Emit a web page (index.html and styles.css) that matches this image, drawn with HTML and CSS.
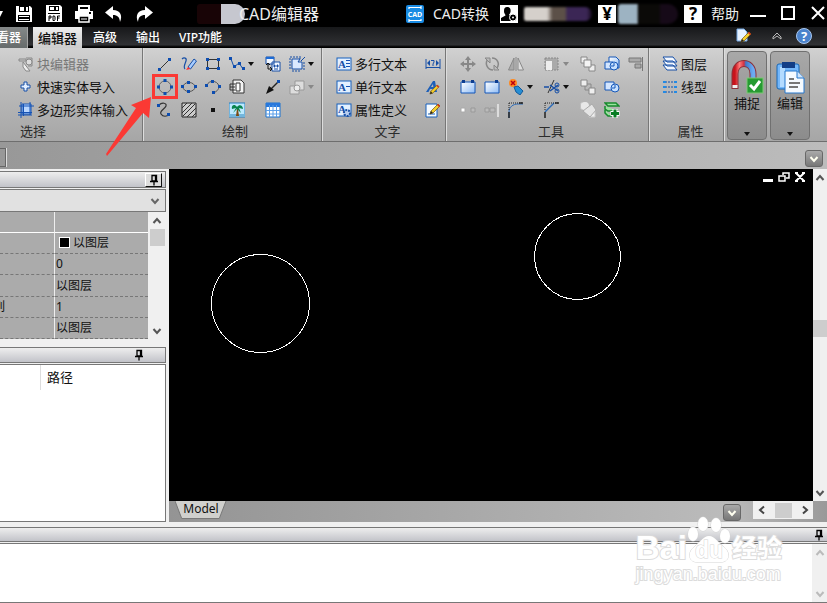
FILE: index.html
```html
<!DOCTYPE html>
<html lang="zh-CN">
<head>
<meta charset="utf-8">
<title>CAD编辑器</title>
<link rel="stylesheet" href="styles.css">
</head>
<body>
<svg class="defs" aria-hidden="true">
  <defs>
    <linearGradient id="blue" x1="0" y1="0" x2="1" y2="1"><stop offset="0" stop-color="#fff"/><stop offset="1" stop-color="#8fbcf5"/></linearGradient>
    <linearGradient id="red" x1="0" y1="0" x2="1" y2="0"><stop offset="0" stop-color="#c8141c"/><stop offset=".25" stop-color="#ff7a7a"/><stop offset=".5" stop-color="#d03040"/><stop offset=".6" stop-color="#3b78c9"/><stop offset="1" stop-color="#6cabf2"/></linearGradient>
    <symbol id="down" viewBox="0 0 10 10"><path d="M1.500 3 5 7 8.500 3" fill="none" stroke="currentColor" stroke-width="2"/></symbol>
    <symbol id="up" viewBox="0 0 10 10"><path d="M1.500 7 5 3 8.500 7" fill="none" stroke="currentColor" stroke-width="2"/></symbol>
    <symbol id="left" viewBox="0 0 10 10"><path d="M7 1.500 3 5 7 8.500" fill="none" stroke="currentColor" stroke-width="2"/></symbol>
    <symbol id="right" viewBox="0 0 10 10"><path d="M3 1.500 7 5 3 8.500" fill="none" stroke="currentColor" stroke-width="2"/></symbol>
    <symbol id="caret" viewBox="0 0 6 4"><path d="M0 0H6L3 4Z" fill="currentColor"/></symbol>
    <symbol id="pin" viewBox="0 0 10 12"><path d="M3 1.500H7.500V7H3ZM1 7.500H9M5 7V11.500M6.500 1V7" fill="none" stroke="#000" stroke-width="1.300"/></symbol>
    <symbol id="pencil" viewBox="0 0 12 12"><path d="M1 11 2 8 9 1 11 3 4 10Z" fill="#f5cf2c" stroke="#72510d" stroke-width=".7"/><path d="M8 2 9 1 11 3 10 4Z" fill="#d8281b"/><path d="M1 11 2 8 4 10Z" fill="#222"/></symbol>
  </defs>
</svg>
<div class="app">
  <header class="titlebar">
    <div class="quick">
      <button class="tb folder" aria-label="打开"><svg viewBox="0 0 18 18"><path d="M8 14 14 6H18L14 14Z" fill="#fff"/></svg></button>
      <button class="tb" aria-label="保存"><svg viewBox="0 0 18 18"><path d="M1 1H15L17 3V17H1Z" fill="#fff"/><path d="M4 1H14V7H4ZM3 10H15V16H3Z" fill="#000"/><path d="M5 2H9V6H5ZM11 2H13V6H11ZM4 11H14V12H4ZM4 14H14V15H4Z" fill="#fff"/></svg></button>
      <button class="tb" aria-label="保存为 PDF"><svg viewBox="0 0 18 18"><path d="M1 0H15L17 2V17H1Z" fill="#fff"/><path d="M4 1H14V6H4ZM3 8H15V9H3Z" fill="#000"/><path d="M5 2H9V5H5ZM11 2H13V5H11Z" fill="#fff"/><path d="M4 16V11H6V13H4M8 11V15.500H9.500L10 14.500V12L9.500 11ZM12.500 16V11H15M12.500 13H14.500" stroke="#000" fill="none"/></svg></button>
      <button class="tb" aria-label="打印"><svg viewBox="0 0 18 18"><path d="M4 1H14V5H4Z" fill="none" stroke="#fff" stroke-width="2"/><path d="M0 6H18V14H14V11H4V14H0Z" fill="#fff"/><path d="M4 11H14V17H4Z" fill="none" stroke="#fff" stroke-width="1.500"/><path d="M6 14H12" stroke="#fff"/><path d="M14 7H16V9H14Z" fill="#000"/></svg></button>
      <button class="tb" aria-label="撤销"><svg viewBox="0 0 18 18"><path d="M0 7.500 8 1V5C15 5 18 10 15 17 14.500 12 12.500 10 8 10V14Z" fill="#fff"/></svg></button>
      <button class="tb" aria-label="重做"><svg viewBox="0 0 18 18"><path d="M18 7.500 10 1V5C3 5 0 10 3 17 3.500 12 5.500 10 10 10V14Z" fill="#fff"/></svg></button>
    </div>
    <div class="caption"><span class="smudge smudge-a"></span><h1>CAD编辑器</h1></div>
    <div class="account">
      <button class="convert"><svg viewBox="0 0 18 18"><rect width="18" height="18" rx="2" fill="#198be3"/><path d="M3 4V2.500H15M15 1V4M15 14V15.500H3M3 14V17" stroke="#fff" fill="none" stroke-width="1.200"/><text x="9" y="12" class="badge-text">CAD</text></svg><span>CAD转换</span></button>
      <button class="tb user" aria-label="用户"><svg viewBox="0 0 18 18"><rect width="18" height="18" fill="#fff"/><path d="M7 2C10 2 11 4 10.500 7 10 9 9 9 9 10L13 12V16H1V13L5.500 10.500C5.500 9 4 9 4 6 4 3 5 2 7 2Z" fill="#000"/><circle cx="13" cy="12.500" r="3.500" fill="#000" stroke="#fff"/><circle cx="13" cy="12.500" r="1" fill="#fff"/></svg></button>
      <span class="smudge smudge-b"></span>
      <button class="square">¥</button>
      <span class="smudge smudge-c"></span>
      <button class="square">?</button>
      <a class="help" href="#">帮助</a>
    </div>
    <div class="window">
      <button class="tb" aria-label="最小化"><svg viewBox="0 0 18 18"><path d="M1 11H17" stroke="#fff" stroke-width="2"/></svg></button>
      <button class="tb" aria-label="最大化"><svg viewBox="0 0 18 18"><path d="M3 2H15V14H3Z" stroke="#fff" fill="none" stroke-width="2"/></svg></button>
      <button class="tb" aria-label="关闭"><svg viewBox="0 0 18 18"><path d="M3 2 15 14M15 2 3 14" stroke="#fff" stroke-width="2"/></svg></button>
    </div>
  </header>

  <nav class="tabs">
    <button class="tab viewer">看器</button>
    <button class="tab active">编辑器</button>
    <button class="tab">高级</button>
    <button class="tab">输出</button>
    <button class="tab">VIP功能</button>
    <div class="tab-tools">
      <button class="ic" aria-label="样式"><svg viewBox="0 0 16 16"><path d="M1 1H8L11 4V13H1Z" fill="#e8f2ff" stroke="#74a9e6"/><use href="#pencil" x="4" y="3" width="12" height="12"/></svg></button>
      <button class="ic fold" aria-label="折叠"><svg viewBox="0 0 16 16"><path d="M4 9 8 5 12 9V11L8 8 4 11Z" stroke="#bbb" fill="none"/></svg></button>
      <button class="ic" aria-label="帮助"><svg viewBox="0 0 16 16"><circle cx="8" cy="8" r="7.500" fill="#4b83cc" stroke="#a9c7ef"/><text x="8" y="13" class="q">?</text></svg></button>
    </div>
  </nav>

  <section class="ribbon">
    <div class="panel select">
      <div class="rows">
        <button class="cmd off"><svg viewBox="0 0 16 16"><path d="M1 3H8V5H1ZM8 2H14V10H10" fill="none" stroke="#888"/><circle cx="11" cy="6" r="3" fill="#ddd" stroke="#888"/><path d="M5 6 12 15H8L5 11Z" fill="#eee" stroke="#888"/></svg>块编辑器</button>
        <button class="cmd"><svg viewBox="0 0 16 16"><path d="M6 3H9V6H12V9H9V12H6V9H3V6H6Z" fill="#e3efff" stroke="#174fa6"/></svg>快速实体导入</button>
        <button class="cmd"><svg viewBox="0 0 16 16"><path d="M4 2H13V12H4Z" fill="#b8d6ff" stroke="#1552b4"/><path d="M1 4H16M0 13H14M3 0V16M12 0V13M5.500 2V14M0 10.500H14" fill="none" stroke="#1552b4"/></svg>多边形实体输入</button>
      </div>
      <h2>选择</h2>
    </div>

    <div class="panel draw">
      <div class="tools">
        <button class="ic" aria-label="直线"><svg viewBox="0 0 16 16"><path d="M3 13 13 3" stroke="#333"/><path d="M1 12H4V15H1ZM11 2H14V5H11Z" fill="#0d4db0"/></svg></button>
        <button class="ic" aria-label="徒手画"><svg viewBox="0 0 16 16"><path d="M1 3C3 1 6 2 5 5S2 11 4 13" fill="none" stroke="#174fa6" stroke-width="1.200"/><path d="M7 11 13 3 15.500 5 9.500 13Z" fill="#a7ccff" stroke="#174fa6"/><path d="M5 14 7 11 9.500 13Z" fill="#f33"/></svg></button>
        <button class="ic" aria-label="矩形"><svg viewBox="0 0 16 16"><path d="M2.500 3.500H13.500V12.500H2.500Z" fill="none" stroke="#333"/><path d="M1 2H4V5H1ZM12 2H15V5H12ZM1 11H4V14H1ZM12 11H15V14H12Z" fill="#0d4db0"/></svg></button>
        <button class="ic more" aria-label="多段线"><svg viewBox="0 0 16 16"><path d="M2 3 5 11 10 7 14 13" fill="none" stroke="#174fa6"/><path d="M0 1H3V4H0ZM4 9H7V12H4ZM9 6H12V9H9ZM13 11H16V14H13Z" fill="#0d4db0"/></svg><svg class="caret"><use href="#caret"/></svg></button>
        <button class="ic" aria-label="插入块"><svg viewBox="0 0 16 16"><path d="M1 1H9V8H1ZM7 6H15V15H7Z" fill="#f3f8ff" stroke="#174fa6"/><path d="M1 1H9V3H1Z" fill="#1c6bd6"/><path d="M3 7V13H6M1 9 3 7 5 9M5 11 7 13 5 15" fill="none" stroke="#111"/><path d="M9 9H10V11H9ZM12 9H13V11H12ZM9 13H13" fill="#174fa6" stroke="#174fa6"/></svg></button>
        <button class="ic more" aria-label="图案"><svg viewBox="0 0 16 16"><path d="M3 3H11L9 6 13 6V13H3Z" fill="#dbe9ff" stroke="#174fa6"/><path d="M2 0V2M5 0V2M8 0V2M11 0V3M0 3H2M0 6H2M0 9H2M0 12H2M14 7H16M14 10H16M14 13H16M4 14V16M7 14V16M10 14V16M12 5 16 1" stroke="#174fa6"/></svg><svg class="caret"><use href="#caret"/></svg></button>
        <button class="ic picked" aria-label="圆"><svg viewBox="0 0 16 16"><circle cx="8" cy="8" r="6" fill="none" stroke="#666"/><path d="M6.500 0H9.500V3H6.500ZM6.500 13H9.500V16H6.500ZM0 6.500H3V9.500H0ZM13 6.500H16V9.500H13Z" fill="#0d4db0"/></svg>
          <svg class="pointer" viewBox="0 0 48 64"><path d="M46 1 44 22 38 17 2 60 1 58 31 12 26 9Z" fill="#fb3934"/></svg>
        </button>
        <button class="ic" aria-label="椭圆"><svg viewBox="0 0 16 16"><ellipse cx="8" cy="8" rx="6" ry="4.500" fill="none" stroke="#555"/><path d="M6 2H9V5H6ZM6 11H9V14H6ZM0 6H3V9H0ZM13 6H16V9H13Z" fill="#0d4db0"/></svg></button>
        <button class="ic" aria-label="圆弧"><svg viewBox="0 0 16 16"><path d="M2 6C4 1 12 1 14 7 14 11 11 13 8 14" fill="none" stroke="#555"/><path d="M0 5H3V8H0ZM6 1H9V4H6ZM13 6H16V9H13ZM7 12H10V15H7Z" fill="#0d4db0"/></svg></button>
        <button class="ic" aria-label="图块"><svg viewBox="0 0 16 16"><path d="M4 1H12L15 4V14H4Z" fill="#f4f4f4" stroke="#333"/><path d="M7 4H11V12H7ZM1 5H6M1 8H6M1 11H6M1 5V11" fill="#fff" stroke="#333"/></svg></button>
        <button class="ic" aria-label="射线"><svg viewBox="0 0 16 16"><path d="M14 2 5 11" stroke="#222" stroke-width="1.500"/><path d="M1 15 4 7 9 11Z" fill="#111"/><path d="M12 1H15V4H12Z" fill="#0d4db0"/></svg></button>
        <button class="ic more off" aria-label="区域"><svg viewBox="0 0 16 16"><path d="M1 7H10V15H1ZM6 2H15V11H6Z" fill="#ddd" stroke="#999"/><circle cx="8" cy="9" r="3" fill="#eee" stroke="#999"/></svg><svg class="caret"><use href="#caret"/></svg></button>
        <button class="ic" aria-label="样条"><svg viewBox="0 0 16 16"><path d="M2 3C5 0 10 1 9 4S2 9 4 12 10 15 12 12" fill="none" stroke="#333" stroke-width="1.200"/><path d="M0 2H3V5H0ZM10 11H13V14H10Z" fill="#0d4db0"/></svg></button>
        <button class="ic" aria-label="填充"><svg viewBox="0 0 16 16"><path d="M1 1H15V15H1Z" fill="#ccc" stroke="#222"/><path d="M1 6 6 1M1 11 11 1M2 14 14 2M6 15 15 6M11 15 15 11" stroke="#333"/></svg></button>
        <button class="ic" aria-label="点"><svg viewBox="0 0 16 16"><path d="M6 6H10V10H6Z" fill="#111"/></svg></button>
        <button class="ic" aria-label="图像"><svg viewBox="0 0 16 16"><path d="M0 1H16V15H0Z" fill="#bce9ff" stroke="#267fbd"/><path d="M0 12H16V15H0Z" fill="#73b6dd"/><path d="M8 7 7 14H10L9 7Z" fill="#7c4a12"/><path d="M8 5C5 1 2 4 3 7L7 6 4 11 8 7 12 11 10 6 14 7C14 3 10 2 8 5Z" fill="#09844d"/></svg></button>
        <button class="ic" aria-label="表格"><svg viewBox="0 0 16 16"><path d="M1 1H15V15H1Z" fill="#fff" stroke="#1873d1"/><path d="M1 1H15V5H1Z" fill="#2878dc"/><path d="M4.500 3V15M8 3V15M11.500 3V15M1 8.500H15M1 12H15" stroke="#5a9ee9"/></svg></button>
      </div>
      <h2>绘制</h2>
    </div>

    <div class="panel text">
      <div class="text-cols">
        <div class="rows">
          <button class="cmd"><svg viewBox="0 0 16 16"><rect x="1" y="2" width="14" height="12" fill="#e4f0ff" stroke="#1761bd"/><text x="6" y="12" class="a">A</text><path d="M10 4.500H14M10 7.500H14M10 10.500H14" stroke="#1552b4"/></svg>多行文本</button>
          <button class="cmd"><svg viewBox="0 0 16 16"><rect x="1" y="2" width="14" height="12" fill="#e4f0ff" stroke="#1761bd"/><text x="6" y="12" class="a">A</text><path d="M10 7.500H14" stroke="#1552b4"/></svg>单行文本</button>
          <button class="cmd"><svg viewBox="0 0 16 16"><rect x="1" y="2" width="14" height="12" fill="#e4f0ff" stroke="#1761bd"/><text x="6" y="11" class="a">A</text><circle cx="11" cy="11" r="3" fill="#b9cff0" stroke="#174fa6" stroke-width="2" stroke-dasharray="2 1"/></svg>属性定义</button>
        </div>
        <div class="rows">
          <button class="ic" aria-label="标注"><svg viewBox="0 0 16 16"><path d="M1 3V13M15 3V13M1 11.500H15" stroke="#174fa6"/><path d="M2 7 5 4V10ZM14 7 11 4V10Z" fill="#174fa6"/><path d="M6 4.500H9V6L8 8V10" fill="none" stroke="#174fa6"/></svg></button>
          <button class="ic" aria-label="文字样式"><svg viewBox="0 0 16 16"><path d="M1 13 8 2H10L12 13H9L8.500 10H5L3.500 13ZM6 8H8.300L8 5Z" fill="#1d5fb8"/><use href="#pencil" x="4" y="5" width="11" height="11"/></svg></button>
          <button class="ic" aria-label="编辑文字"><svg viewBox="0 0 16 16"><path d="M1 2H12V15H1Z" fill="#f6fbff" stroke="#1761bd"/><path d="M3 12H10" stroke="#1761bd"/><use href="#pencil" x="4" y="1" width="12" height="12"/></svg></button>
        </div>
      </div>
      <h2>文字</h2>
    </div>

    <div class="panel edit">
      <div class="tools">
        <button class="ic" aria-label="移动"><svg viewBox="0 0 16 16"><path d="M8 2V14M2 8H14" stroke="#888" stroke-width="2"/><path d="M5 4 8 0 11 4ZM5 12 8 16 11 12ZM4 5 0 8 4 11ZM12 5 16 8 12 11Z" fill="#888"/></svg></button>
        <button class="ic" aria-label="旋转"><svg viewBox="0 0 16 16"><path d="M4 3C0 8 4 14 9 14M12 13C17 8 13 2 8 2" fill="none" stroke="#888" stroke-width="1.500"/><path d="M1 2H6V7ZM15 14H10V9Z" fill="#bbb" stroke="#888"/></svg></button>
        <button class="ic" aria-label="镜像"><svg viewBox="0 0 16 16"><path d="M6 2V14H0.500Z" fill="#aaa" stroke="#888"/><path d="M10 2V14H15.500Z" fill="#ddd" stroke="#888"/><path d="M8 1V15" stroke="#888"/></svg></button>
        <button class="ic more off" aria-label="拉伸"><svg viewBox="0 0 16 16"><path d="M1 2H14V14H1Z" fill="#aaa" stroke="#888" stroke-dasharray="2 1"/><path d="M2 5H8V14H2Z" fill="#eee"/></svg><svg class="caret"><use href="#caret"/></svg></button>
        <button class="ic" aria-label="复制"><svg viewBox="0 0 16 16"><path d="M1 1H7V7H1ZM9 9H15V15H9Z" fill="#eee" stroke="#888"/><path d="M4 4H11V11H4Z" fill="#f4f4f4" stroke="#888"/></svg></button>
        <button class="ic" aria-label="缩放"><svg viewBox="0 0 16 16"><path d="M5 1H12L15 4V12H5Z" fill="url(#blue)" stroke="#1557b8"/><path d="M1 6H9V13H1Z" fill="#d4e6ff" stroke="#1557b8"/><circle cx="10" cy="10" r="4" fill="#c6e0ff" stroke="#1557b8"/><path d="M10 7V10H7" fill="none" stroke="#1557b8"/></svg></button>
        <button class="ic" aria-label="对齐"><svg viewBox="0 0 16 16"><path d="M1 2H13V6H1ZM7 8H13V12H7Z" fill="#aaa" stroke="#777"/><path d="M14.500 1V15" stroke="#777"/></svg></button>
        <button class="ic" aria-label="阵列"><svg viewBox="0 0 16 16"><path d="M1 3H15V14H1Z" fill="url(#blue)" stroke="#1557b8"/><path d="M2 1H5V4H2ZM11 1H14V4H11Z" fill="#0d3d90"/></svg></button>
        <button class="ic" aria-label="打断"><svg viewBox="0 0 16 16"><path d="M1 3H15V14H1Z" fill="url(#blue)" stroke="#1557b8"/><path d="M11 1H14V4H11Z" fill="#0d3d90"/></svg></button>
        <button class="ic more" aria-label="分解"><svg viewBox="0 0 16 16"><circle cx="5" cy="4" r="4" fill="#ff8a20"/><path d="M3 2 7 6M7 2 3 6" stroke="#b01" stroke-width="1.500"/><path d="M6 8 10 7 15 12 12 16 8 13Z" fill="#278ed3" stroke="#145a9b"/></svg><svg class="caret"><use href="#caret"/></svg></button>
        <button class="ic more" aria-label="修剪"><svg viewBox="0 0 16 16"><path d="M4 14 10 1" stroke="#333"/><path d="M0 8H5M6 6 14 12M6 12 14 6" stroke="#174fa6" stroke-width="1.500"/><circle cx="13" cy="6" r="2" fill="none" stroke="#174fa6"/><circle cx="13" cy="12" r="2" fill="none" stroke="#174fa6"/></svg><svg class="caret"><use href="#caret"/></svg></button>
        <button class="ic" aria-label="编组"><svg viewBox="0 0 16 16"><path d="M7 5H11V9M5 7V11H9" fill="none" stroke="#888"/><path d="M1 1H7V7H1ZM9 9H15V15H9Z" fill="#eee" stroke="#888"/></svg></button>
        <button class="ic" aria-label="测量"><svg viewBox="0 0 16 16"><path d="M1 3H10V11H1Z" fill="#d4e6ff" stroke="#1557b8"/><circle cx="11" cy="9" r="4" fill="#c6e0ff" stroke="#1557b8"/><path d="M11 6V9H8" fill="none" stroke="#1557b8"/></svg></button>
        <span></span>
        <button class="ic" aria-label="断点"><svg viewBox="0 0 16 16"><path d="M1 6H5V10H1Z" fill="#fff" stroke="#aaa"/><path d="M11 6H15V10H11Z" fill="#bbb" stroke="#999"/></svg></button>
        <button class="ic" aria-label="延伸"><svg viewBox="0 0 16 16"><path d="M1 6H5V10H1ZM6 6H11V10H6Z" fill="#bbb" stroke="#999"/><path d="M14 2V15" stroke="#ddd" stroke-width="2"/></svg></button>
        <button class="ic" aria-label="圆角"><svg viewBox="0 0 16 16"><path d="M1 16V10C1 5 5 2 10 2H15" fill="none" stroke="#2a6ab8"/><path d="M1 1H15M1 1V9" stroke="#222" stroke-dasharray="1 1"/><path d="M1 10V16M11 1H15" stroke="#222" stroke-width="1.500"/></svg></button>
        <button class="ic" aria-label="倒角"><svg viewBox="0 0 16 16"><path d="M1 10 10 1" stroke="#2a6ab8" stroke-width="1.500"/><path d="M1 1H15M1 1V9" stroke="#222" stroke-dasharray="1 1"/><path d="M1 10V16M11 1H15" stroke="#222" stroke-width="1.500"/></svg></button>
        <button class="ic" aria-label="合并"><svg viewBox="0 0 16 16"><path d="M1 1H7V7H1ZM9 9H15V15H9Z" fill="#eee" stroke="#ccc"/><circle cx="5" cy="4" r="4" fill="#e8e8e8"/><path d="M3 9 12 2 16 8 10 15Z" fill="#e4e4e4" stroke="#aaa"/></svg></button>
        <button class="ic" aria-label="添加图层"><svg viewBox="0 0 16 16"><path d="M1 1H12L15 4H4ZM1 4V7L4 9H14M1 8V11L4 14H8" fill="#9ae39f" stroke="#168b2c" stroke-width="1.500"/><path d="M11 7V16M6.500 11.500H15.500" stroke="#fff" stroke-width="5"/><path d="M11 7.500V15.500M7 11.500H15" stroke="#087c23" stroke-width="3"/></svg></button>
      </div>
      <h2>工具</h2>
    </div>

    <div class="panel props">
      <div class="rows">
        <button class="cmd"><svg viewBox="0 0 16 16"><path d="M1 9H11L15 14H5ZM1 5H11L15 10H5ZM1 1H11L15 6H5Z" fill="#f3f8ff" stroke="#174fa6"/></svg>图层</button>
        <button class="cmd"><svg viewBox="0 0 16 16"><path d="M3 3H13M3 8H13M3 13H13" stroke="#174fa6" stroke-dasharray="2 1"/><path d="M1 2H4V4H1ZM12 2H15V4H12ZM1 7H4V9H1ZM12 7H15V9H12ZM1 12H4V14H1ZM12 12H15V14H12Z" fill="#238ae5"/></svg>线型</button>
      </div>
      <h2>属性</h2>
    </div>

    <div class="large">
      <button class="tall"><svg viewBox="0 0 36 36"><path d="M6 30V15C6 1 24 1 24 15V23" fill="none" stroke="#8d3038" stroke-width="7"/><path d="M6 27V15C6 1 24 1 24 15V22" fill="none" stroke="url(#red)" stroke-width="5"/><path d="M3.500 26H8.500V29H3.500Z" fill="#eee"/><rect x="18" y="19" width="16" height="15" fill="#269b32" stroke="#7cc976"/><path d="M21 26 25 30 31 22" fill="none" stroke="#fff" stroke-width="3"/></svg>捕捉<svg class="caret"><use href="#caret"/></svg></button>
      <button class="tall"><svg viewBox="0 0 36 36"><rect x="5" y="5" width="22" height="25" rx="2" fill="#74b7fa" stroke="#1767b5"/><rect x="8" y="8" width="5" height="20" fill="#b3dbff"/><path d="M10 3H23V9H10Z" fill="#123e87"/><path d="M13 12H25L32 19V34H13Z" fill="#f5faff" stroke="#2577cc"/><path d="M25 12V19H32" fill="#cfe4fa" stroke="#2577cc"/><path d="M17 20H22M17 24H28M17 28H26" stroke="#777" stroke-width="2"/></svg>编辑<svg class="caret"><use href="#caret"/></svg></button>
    </div>
  </section>

  <div class="docbar"><span class="doctab"></span><button class="drop" aria-label="文档列表"><svg><use href="#down"/></svg></button></div>

  <main class="work">
    <aside class="side">
      <div class="dockhead"><button class="pin raised" aria-label="固定"><svg><use href="#pin"/></svg></button></div>
      <div class="combo"><select aria-label="选择对象"><option></option></select><svg><use href="#down"/></svg></div>
      <div class="grid-wrap">
        <table class="grid">
          <tbody>
            <tr class="cat"><td></td><td></td></tr>
            <tr><td></td><td class="swatched"><i class="swatch"></i>以图层</td></tr>
            <tr><td></td><td>0</td></tr>
            <tr><td></td><td>以图层</td></tr>
            <tr><td><span class="cut">列</span></td><td>1</td></tr>
            <tr><td></td><td>以图层</td></tr>
          </tbody>
        </table>
        <div class="vscroll"><button aria-label="向上"><svg><use href="#up"/></svg></button><i class="thumb"></i><button class="end" aria-label="向下"><svg><use href="#down"/></svg></button></div>
      </div>
      <div class="dockhead second"><button class="pin" aria-label="固定"><svg><use href="#pin"/></svg></button></div>
      <div class="paths"><span class="path-name"></span><span class="path-col">路径</span></div>
    </aside>
    <section class="view">
      <div class="stage">
        <div class="canvas">
          <svg class="drawing"><circle cx="91.500" cy="134.500" r="49"/><circle cx="408.500" cy="87.500" r="43"/></svg>
          <div class="mdi">
            <button aria-label="最小化"><svg viewBox="0 0 12 12"><path d="M1 8H11V11H1Z" fill="#fff"/></svg></button>
            <button aria-label="还原"><svg viewBox="0 0 12 12"><path d="M5 4V2H11V7H8M1 5H7V10H1Z" fill="none" stroke="#fff" stroke-width="1.500"/></svg></button>
            <button aria-label="关闭"><svg viewBox="0 0 12 12"><path d="M2 2 10 10M10 2 2 10M1 2H4M8 2H11M1 10H4M8 10H11" stroke="#fff" stroke-width="2"/></svg></button>
          </div>
        </div>
        <div class="vscroll main"><button aria-label="向上"><svg><use href="#up"/></svg></button><i class="thumb"></i><button class="end" aria-label="向下"><svg><use href="#down"/></svg></button></div>
      </div>
      <div class="modelbar">
        <button class="model"><svg viewBox="0 0 54 18" preserveAspectRatio="none"><path d="M0 0 7 17.500H46L53 0" fill="#d0d0cd" stroke="#777"/></svg><span>Model</span></button>
        <button class="drop" aria-label="布局列表"><svg><use href="#down"/></svg></button>
        <div class="hscroll"><button aria-label="向左"><svg><use href="#left"/></svg></button><i class="thumb"></i><button aria-label="向右"><svg><use href="#right"/></svg></button></div>
      </div>
    </section>
  </main>

  <footer class="command">
    <div class="dockhead"><button class="pin" aria-label="固定"><svg><use href="#pin"/></svg></button></div>
    <div class="console"><textarea aria-label="命令行"></textarea><div class="vscroll pale"><button aria-label="向上"><svg><use href="#up"/></svg></button><button class="end" aria-label="向下"><svg><use href="#down"/></svg></button></div></div>
    <div class="watermark">
      <div class="mark"><span>Bai</span><svg viewBox="0 0 44 48"><path d="M22 20C28 20 31 27 37 31 45 38 41 47 33 46H11C3 47-1 38 7 31 13 27 16 20 22 20Z"/><ellipse cx="6" cy="18" rx="5" ry="7"/><ellipse cx="16" cy="8" rx="5" ry="7"/><ellipse cx="29" cy="9" rx="5" ry="7"/><ellipse cx="38" cy="20" rx="5" ry="7"/><text x="22" y="42">du</text></svg><span class="cn">经验</span></div>
      <div class="site">jingyan.baidu.com</div>
    </div>
  </footer>
</div>
</body>
</html>
```
FILE: styles.css
```css
* { box-sizing: border-box; }
body { margin: 0; font: 13px/16px "Noto Sans", "Noto Sans CJK SC", sans-serif; color: #111; }
button, select, textarea { font: inherit; color: inherit; background: none; border: 0; padding: 0; margin: 0; border-radius: 0; }
svg { display: block; flex: none; }
h1, h2 { margin: 0; font-weight: 400; }
.defs { position: absolute; width: 0; height: 0; }
.app { display: flex; flex-direction: column; height: 100vh; min-height: 560px; overflow: hidden; background: #f0f0f0; }

.titlebar { display: flex; align-items: center; height: 27px; background: #000; color: #eee; overflow: hidden; flex: none; }
.tb, .tb svg { width: 18px; height: 18px; flex: none; }
.quick { display: flex; gap: 12px; margin-left: -15px; }
.caption { display: flex; align-items: center; margin-left: 44px; }
.caption h1 { font-size: 16px; line-height: 24px; white-space: nowrap; margin-left: -6px; z-index: 1; }
.smudge { display: block; height: 20px; border-radius: 4px 12px 12px 4px; flex: none; }
.smudge-a { width: 48px; background: linear-gradient(90deg, #180406 0 50%, #c6c7cf 50%); }
.smudge-b { width: 68px; height: 14px; margin: 0 6px; filter: blur(1px); background: linear-gradient(90deg, #d5d0cb 0 34%, #5c5048 42% 60%, #3b2655 64% 92%, #150a1c); }
.smudge-c { width: 60px; margin: 0 6px 0 2px; filter: blur(1px); background: linear-gradient(90deg, #9db3c2 0 32%, #0b0a08 34% 68%, #160a18 72%); }
.account { display: flex; align-items: center; margin-left: auto; }
.convert { display: flex; align-items: center; gap: 9px; margin-right: 11px; font-size: 14px; white-space: nowrap; }
.convert svg { width: 18px; height: 18px; }
.badge-text { font: bold 7px "Open Sans", sans-serif; fill: #fff; text-anchor: middle; }
.square { width: 18px; height: 18px; background: #fff; color: #000; font: bold 17px/18px "Noto Sans", sans-serif; text-align: center; }
.help { color: inherit; text-decoration: none; font-size: 14px; margin: 0 10px 0 9px; }
.window { display: flex; gap: 12px; }

.tabs { display: flex; align-items: stretch; height: 21px; background: linear-gradient(#17181a, #303134 85%, #000 95%); color: #fff; flex: none; }
.tab { padding: 0 9px; margin-right: 1px; font-size: 12px; font-weight: 500; line-height: 20px; white-space: nowrap; }
.viewer { width: 28px; padding: 0; margin-right: 5px; text-indent: -3px; text-align: left; background: linear-gradient(#858989, #666b6b); border-right: 1px solid #a5a5a5; }
.tab.active { padding: 0 5px; margin-right: 2px; font-size: 13px; background: linear-gradient(#eee, #ccc); color: #111; }
.tab-tools { display: flex; gap: 3px; margin-left: auto; padding-right: 11px; }

.ribbon { display: flex; height: 94px; background: linear-gradient(#d1d1d1, #bbb 40%, #a6a6a6); border-bottom: 1px solid #6e6e6e; flex: none; }
.panel { display: flex; flex-direction: column; padding-top: 4px; border-right: 1px solid #777; box-shadow: 1px 0 #ddd; flex: none; }
.panel h2 { padding-left: 8px; font-size: 13px; line-height: 20px; text-align: center; color: #2c2c2c; }
.rows { display: flex; flex-direction: column; height: 69px; }
.cmd { display: flex; align-items: center; gap: 3px; height: 23px; white-space: nowrap; }
.cmd svg { width: 16px; height: 16px; }
.cmd.off { color: #777; }
.off .caret { color: #888; }
.ic { display: flex; align-items: center; height: 23px; padding: 0 4px; }
.tab-tools .ic { height: 18px; }
.fold { margin-left: 6px; }
.ic svg { width: 16px; height: 16px; }
.ic .caret, .tall .caret { width: 6px; height: 4px; }
.ic .caret { margin-left: 3px; }
.tools { display: grid; grid-template-columns: 24px 24px 24px 36px 24px 36px; grid-auto-rows: 23px; }
.select { width: 143px; padding-left: 18px; }
.select h2 { text-align: left; padding-left: 2px; }
.draw { width: 179px; padding-left: 10px; }
.draw h2 { padding: 0 4px 0 0; }
.text { width: 124px; }
.text-cols { display: flex; justify-content: space-between; padding-left: 14px; }
.edit { width: 203px; padding-left: 10px; }
.edit h2 { padding: 0 2px 0 0; }
.edit .tools { grid-template-columns: 24px 24px 36px 36px 24px 24px 24px; }
.props { width: 75px; padding-left: 13px; }
.props h2 { padding: 0 4px 0 0; }
.picked { position: relative; outline: 3px solid #fb3934; outline-offset: -2px; }
.ic .pointer { position: absolute; right: 24px; top: 21px; width: 48px; height: 64px; z-index: 3; }
.a { font: bold 11px "Liberation Serif", serif; fill: #174fa6; text-anchor: middle; }
.q { font: bold 13px "Noto Sans", sans-serif; fill: #fff; text-anchor: middle; }
.large { display: flex; gap: 3px; padding: 3px 3px 1px; }
.tall { display: flex; flex-direction: column; align-items: center; width: 40px; padding-top: 7px; background: linear-gradient(#a8a8a8, #8c8c8c); border: 1px solid #707070; border-radius: 4px; }
.tall > svg:first-child { width: 36px; height: 36px; }
.tall .caret { margin: auto 0 3px; }

.docbar { display: flex; align-items: center; justify-content: space-between; height: 27px; padding-right: 4px; background: linear-gradient(90deg, #989898, #bcbcbc); flex: none; }
.doctab { width: 6px; height: 19px; margin-top: 4px; border: 1px solid #666; border-left: 0; box-shadow: 1px 0 #ddd; }
.drop { display: flex; align-items: center; justify-content: center; width: 18px; height: 17px; border: 1px solid #686868; border-radius: 3px; background: linear-gradient(#aaa, #777); color: #fffff0; }
.docbar .drop { margin-top: 6px; }
.drop svg, .vscroll svg, .hscroll svg, .combo svg { width: 10px; height: 10px; }

.work { display: flex; flex: 1; min-height: 0; }
.side { display: flex; flex-direction: column; width: 169px; padding: 2px 3px 0 0; flex: none; }
.dockhead { display: flex; align-items: center; justify-content: flex-end; height: 17px; border: 1px solid #777; border-left: 0; background: linear-gradient(#eee, #c2c3c9); flex: none; }
.pin { display: flex; align-items: center; justify-content: center; width: 17px; height: 14px; }
.pin svg { width: 10px; height: 12px; }
.raised { margin-right: 3px; border: 1px solid #fff; border-right-color: #111; border-bottom-color: #111; background: #ddd; }
.combo { display: flex; align-items: center; height: 23px; margin-top: 1px; padding-right: 5px; border: 1px solid #777; border-left: 0; background: #e1e1e1; color: #666; flex: none; }
.combo select { appearance: none; flex: 1; min-width: 0; height: 20px; }
.grid-wrap { display: flex; height: 127px; flex: none; }
.grid { flex: 1; border-collapse: separate; border-spacing: 0; table-layout: fixed; background: #ababab; font-size: 12px; }
.grid td { height: 21px; padding: 0 0 0 1px; border-bottom: 1px dashed #777; line-height: 18px; white-space: nowrap; overflow: hidden; }
.grid td:first-child { width: 55px; padding: 0; border-right: 1px solid #eee; }
.grid .cat td { border-bottom: 1px solid #fff; }
.grid .swatched { padding-left: 4px; }
.swatch { display: inline-block; width: 11px; height: 11px; margin-right: 3px; background: #000; border: 1px solid #fff; vertical-align: -1px; }
.cut { display: block; margin-left: -7px; }
.vscroll { display: flex; flex-direction: column; align-items: center; width: 18px; background: #f0f0f0; color: #555; flex: none; }
.vscroll button { display: flex; align-items: center; justify-content: center; width: 14px; height: 17px; }
.vscroll .end { margin-top: auto; }
.vscroll .thumb { width: 15px; height: 17px; background: #cdcdcd; }
.dockhead.second { height: 16px; margin-top: 8px; padding-right: 18px; }
.paths { display: flex; flex: 1; margin-top: 1px; border: 1px solid #777; border-left: 0; background: #fff; }
.path-name { width: 41px; height: 25px; border-right: 1px solid #ddd; }
.path-col { padding: 4px 6px; }

.view { display: flex; flex-direction: column; flex: 1; min-width: 0; }
.stage { display: flex; flex: 1; min-height: 0; }
.canvas { position: relative; flex: 1; background: #000; overflow: hidden; }
.drawing { width: 100%; height: 100%; fill: none; stroke: #fff; shape-rendering: crispEdges; }
.mdi { position: absolute; top: 2px; right: 7px; display: flex; gap: 4px; }
.mdi svg { width: 12px; height: 12px; }
.vscroll.main { width: 14px; }
.main .thumb { width: 14px; margin-top: 134px; }
.modelbar { display: flex; height: 21px; padding-right: 14px; background: linear-gradient(90deg, #949494, #bbb 85%, #999); flex: none; }
.model { display: grid; width: 54px; height: 18px; margin-left: 6px; font: 12px/16px "Noto Sans", sans-serif; }
.model > * { grid-area: 1 / 1; width: 52px; height: 18px; text-align: center; }
.modelbar .drop { margin: 3px 12px 0 auto; }
.hscroll { display: flex; align-items: center; justify-content: space-between; width: 60px; height: 18px; background: #f0f0f0; color: #444; }
.hscroll button { width: 17px; height: 18px; display: flex; align-items: center; justify-content: center; }
.hscroll .thumb { width: 17px; height: 15px; background: #cdcdcd; }

.command { position: relative; display: flex; flex-direction: column; height: 81px; padding-top: 5px; border-bottom: 1px solid #777; flex: none; }
.command .dockhead { height: 15px; border-right: 0; }
.console { display: flex; flex: 1; margin-top: 1px; border-top: 1px solid #777; background: #fff; }
.console textarea { flex: 1; resize: none; outline: 0; }
.vscroll.pale { width: 15px; color: #bbb; }
.watermark { position: absolute; right: 45px; bottom: 18px; color: #fff; font-family: "Liberation Sans", "Noto Sans CJK SC", sans-serif; pointer-events: none; -webkit-text-stroke: 2px #dcdcdc; paint-order: stroke fill; }
.mark { display: flex; align-items: flex-end; font-weight: 700; font-size: 33px; line-height: 32px; }
.mark svg { width: 44px; height: 48px; fill: #fff; stroke: #d4d4d4; }
.mark text { font: bold 23px "Liberation Sans", sans-serif; text-anchor: middle; }
.mark .cn { font-size: 25px; margin-left: 1px; }
.site { font-size: 18px; line-height: 20px; text-align: left; }
```
